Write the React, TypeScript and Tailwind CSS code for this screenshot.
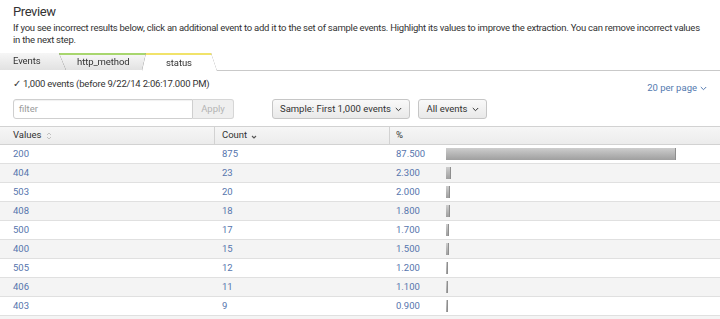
import React from "react";

const rows = [
  { value: "200", count: "875", pct: 87.5 },
  { value: "404", count: "23", pct: 2.3 },
  { value: "503", count: "20", pct: 2.0 },
  { value: "408", count: "18", pct: 1.8 },
  { value: "500", count: "17", pct: 1.7 },
  { value: "400", count: "15", pct: 1.5 },
  { value: "505", count: "12", pct: 1.2 },
  { value: "406", count: "11", pct: 1.1 },
  { value: "403", count: "9", pct: 0.9 },
  { value: "", count: "", pct: 0 },
];

const Chevron = ({ className = "" }: { className?: string }) => (
  <svg width="7" height="5" viewBox="0 0 7 5" className={className}>
    <polyline points="0.8,1 3.5,3.7 6.2,1" fill="none" stroke="currentColor" strokeWidth="1" />
  </svg>
);

const SortBoth = () => (
  <svg width="6" height="8" viewBox="0 0 6 8" className="ml-[4px] text-[#bbb]">
    <polyline points="1,3 3,1 5,3" fill="none" stroke="currentColor" strokeWidth="0.9" />
    <polyline points="1,5 3,7 5,5" fill="none" stroke="currentColor" strokeWidth="0.9" />
  </svg>
);

const SortDown = () => (
  <svg width="6" height="4" viewBox="0 0 6 4" className="ml-[4px] mt-[3px] text-[#555]">
    <polyline points="1,1 3,3 5,1" fill="none" stroke="currentColor" strokeWidth="1.1" />
  </svg>
);

const Tabs = () => (
  <div className="flex h-[18px] mt-[7px] text-[9.5px] tracking-[-0.1px]">
    <div className="drop-shadow-[0_0_0.6px_rgba(0,0,0,0.55)]">
      <div className="w-[66px] h-[17px] bg-gradient-to-b from-[#f6f6f6] to-[#e2e2e2] [clip-path:polygon(0_0,59px_0,66px_100%,0_100%)] flex items-center pl-[13px]">
        Events
      </div>
    </div>
    <div className="-ml-[7px] drop-shadow-[0_0_0.6px_rgba(0,0,0,0.55)]">
      <div className="w-[87px] h-[17px] bg-gradient-to-b from-[#f6f6f6] to-[#e2e2e2] border-t-2 border-[#a8d66e] [clip-path:polygon(0_0,100%_0,calc(100%-4px)_100%,7px_100%)] flex items-center pl-[18px]">
        http_method
      </div>
    </div>
    <div className="-ml-[4px] drop-shadow-[0_0_0.6px_rgba(0,0,0,0.55)]">
      <div className="w-[75px] h-[18px] bg-white border-t-2 border-[#f1e36a] [clip-path:polygon(4px_0,calc(100%-6px)_0,100%_100%,0_100%)] flex items-center pl-[24px]">
        status
      </div>
    </div>
    <div className="flex-1 border-b border-[#c9c9c9] h-[18px]" />
  </div>
);

export default function App() {
  return (
    <div className="w-[720px] h-[319px] overflow-hidden bg-white text-[#333] font-['Roboto','Liberation_Sans',sans-serif]">
      <div className="px-[13px] pt-[3px]">
        <h2 className="text-[13px] leading-[17px] tracking-[-0.4px]">Preview</h2>
        <p className="mt-[2px] text-[9.5px] leading-[12px] whitespace-nowrap tracking-[-0.25px]">
          If you see incorrect results below, click an additional event to add it to the set of sample events. Highlight its values to improve the extraction. You can remove incorrect values
          <br />
          in the next step.
        </p>
      </div>

      <Tabs />

      <div className="px-[13px] mt-[7px] flex justify-between items-start text-[9.5px] leading-[12px]">
        <div className="tracking-[-0.2px]">✓ 1,000 events (before 9/22/14 2:06:17.000 PM)</div>
        <div className="mt-[4px] flex items-center gap-[3px] text-[#5379af]">
          20 per page <Chevron />
        </div>
      </div>

      <div className="px-[13px] mt-[5px] flex items-center h-[20px] text-[9.5px]">
        <div className="flex h-[20px]">
          <div className="w-[180px] h-[20px] border border-[#cfcfcf] rounded-l-[3px] flex items-center px-[5px] text-[#9a9a9a] shadow-[inset_0_1px_1px_rgba(0,0,0,0.06)]">
            filter
          </div>
          <div className="w-[41px] h-[20px] border border-l-0 border-[#d6d6d6] rounded-r-[3px] bg-[#efefef] flex items-center justify-center text-[#b4b4b4]">
            Apply
          </div>
        </div>
        <div className="ml-[38px] w-[138px] h-[20px] border border-[#c6c6c6] rounded-[3px] bg-gradient-to-b from-[#f9f9f9] to-[#e9e9e9] flex items-center justify-center gap-[4px]">
          Sample: First 1,000 events <Chevron />
        </div>
        <div className="ml-[8px] w-[69px] h-[20px] border border-[#c6c6c6] rounded-[3px] bg-gradient-to-b from-[#f9f9f9] to-[#e9e9e9] flex items-center justify-center gap-[4px]">
          All events <Chevron />
        </div>
      </div>

      <div className="mt-[7px] text-[9.5px]">
        <div className="flex h-[19px] bg-gradient-to-b from-[#f6f6f6] to-[#ececec] border-t border-b border-[#d2d2d2]">
          <div className="w-[215px] flex items-center pl-[13px] border-r border-[#d2d2d2]">
            Values <SortBoth />
          </div>
          <div className="w-[175px] flex items-center pl-[7px] border-r border-[#d2d2d2]">
            Count <SortDown />
          </div>
          <div className="flex-1 flex items-center pl-[6px]">%</div>
        </div>
        {rows.map((r, i) => (
          <div
            key={i}
            className={`flex h-[19px] border-b border-[#e0e0e0] text-[#5675ad] ${i % 2 === 0 ? "bg-white" : "bg-[#f4f4f4]"}`}
          >
            <div className="w-[215px] flex items-center pl-[13px]">{r.value}</div>
            <div className="w-[175px] flex items-center pl-[7px]">{r.count}</div>
            <div className="w-[56px] flex items-center pl-[6px]">{r.pct ? r.pct.toFixed(3) : ""}</div>
            <div className="flex-1 flex items-center">
              {r.pct > 0 && (
                <div
                  className="h-[12px] bg-gradient-to-b from-[#cdcdcd] to-[#9f9f9f] border-r border-[#8e8e8e]"
                  style={{ width: Math.max(2, Math.round(r.pct * 2.64) - 1) }}
                />
              )}
            </div>
          </div>
        ))}
      </div>
    </div>
  );
}
